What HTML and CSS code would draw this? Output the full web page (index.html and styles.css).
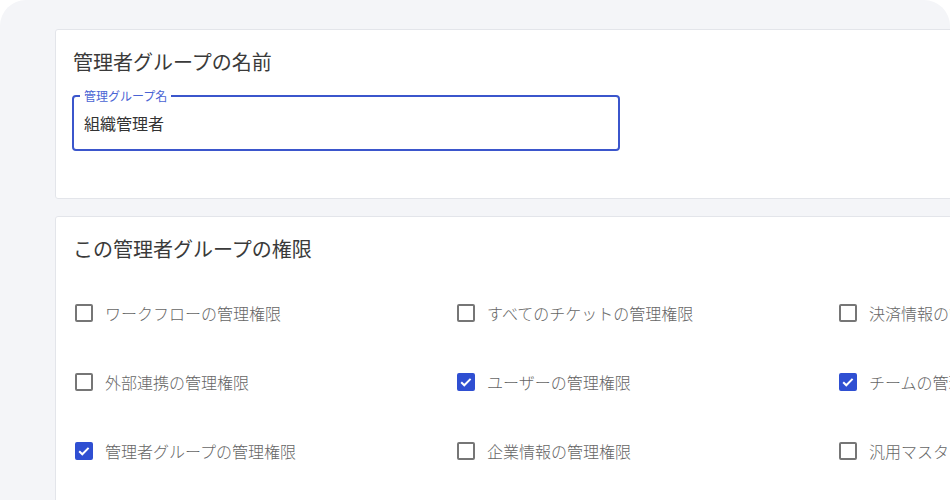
FILE: index.html
```html
<!DOCTYPE html>
<html lang="ja">
<head>
    <meta charset="UTF-8">
    <meta name="viewport" content="width=device-width, initial-scale=1.0">
    <title>管理者グループ</title>
    <link rel="stylesheet" href="styles.css">
</head>
<body>
    <div class="panel">
        <div class="content">
            <section class="card card-name">
                <h2>管理者グループの名前</h2>
                <div class="field">
                    <label>管理グループ名</label>
                    <span class="value">組織管理者</span>
                </div>
            </section>

            <section class="card card-perms">
                <h2>この管理者グループの権限</h2>
                <div class="perms">
                    <div class="perm"><span class="box"></span>ワークフローの管理権限</div>
                    <div class="perm"><span class="box"></span>すべてのチケットの管理権限</div>
                    <div class="perm"><span class="box"></span>決済情報の管理権限</div>

                    <div class="perm"><span class="box"></span>外部連携の管理権限</div>
                    <div class="perm"><span class="box checked"><svg viewBox="0 0 18 18"><path d="M4.2 9.2l3.1 3.1 6.3-6.4"/></svg></span>ユーザーの管理権限</div>
                    <div class="perm"><span class="box checked"><svg viewBox="0 0 18 18"><path d="M4.2 9.2l3.1 3.1 6.3-6.4"/></svg></span>チームの管理権限</div>

                    <div class="perm"><span class="box checked"><svg viewBox="0 0 18 18"><path d="M4.2 9.2l3.1 3.1 6.3-6.4"/></svg></span>管理者グループの管理権限</div>
                    <div class="perm"><span class="box"></span>企業情報の管理権限</div>
                    <div class="perm"><span class="box"></span>汎用マスタの管理権限</div>
                </div>
            </section>
        </div>
    </div>
</body>
</html>
```

FILE: styles.css
```css
* {
    box-sizing: border-box;
    font-family: "Noto Sans CJK JP", "Noto Sans", sans-serif;
}
body {
    margin: 0;
    background: #fff;
    overflow: hidden;
}
.panel {
    width: 950px;
    height: 500px;
    background: #f4f5f8;
    border-radius: 26px 26px 0 0;
    padding: 29px 0 0 55px;
    overflow: hidden;
}
.content {
    width: 1200px;
}
.card {
    background: #fff;
    border: 1px solid #e3e5ea;
    border-radius: 3px;
    padding: 18px 17px 0;
    margin-bottom: 17px;
}
.card-name {
    height: 170px;
}
.card-perms {
    height: 400px;
}
h2 {
    margin: 0;
    font-size: 20px;
    font-weight: 400;
    line-height: 28px;
    color: #3a3a3a;
}
.field {
    position: relative;
    width: 548px;
    height: 56px;
    margin-top: 19px;
    margin-left: -1px;
    border: 2px solid #3b56cc;
    border-radius: 4px;
    display: flex;
    align-items: center;
    padding-left: 10px;
}
.field label {
    position: absolute;
    top: -9px;
    left: 6px;
    padding: 0 4px;
    background: #fff;
    font-size: 12px;
    line-height: 16px;
    color: #4a64d4;
}
.value {
    font-size: 16px;
    color: #333;
}
.perms {
    display: grid;
    grid-template-columns: repeat(3, 382px);
    grid-auto-rows: 69px;
    margin-top: 15px;
}
.perm {
    display: flex;
    align-items: center;
    font-size: 16px;
    font-weight: 300;
    color: #666;
}
.box {
    width: 18px;
    height: 18px;
    margin: 0 12px 0 2px;
    border: 2px solid #767676;
    border-radius: 2px;
    flex-shrink: 0;
}
.box.checked {
    background: #2f4fd2;
    border-color: #2f4fd2;
    position: relative;
}
.box svg {
    position: absolute;
    left: -2px;
    top: -2px;
    width: 18px;
    height: 18px;
    fill: none;
    stroke: #fff;
    stroke-width: 2;
}
```
